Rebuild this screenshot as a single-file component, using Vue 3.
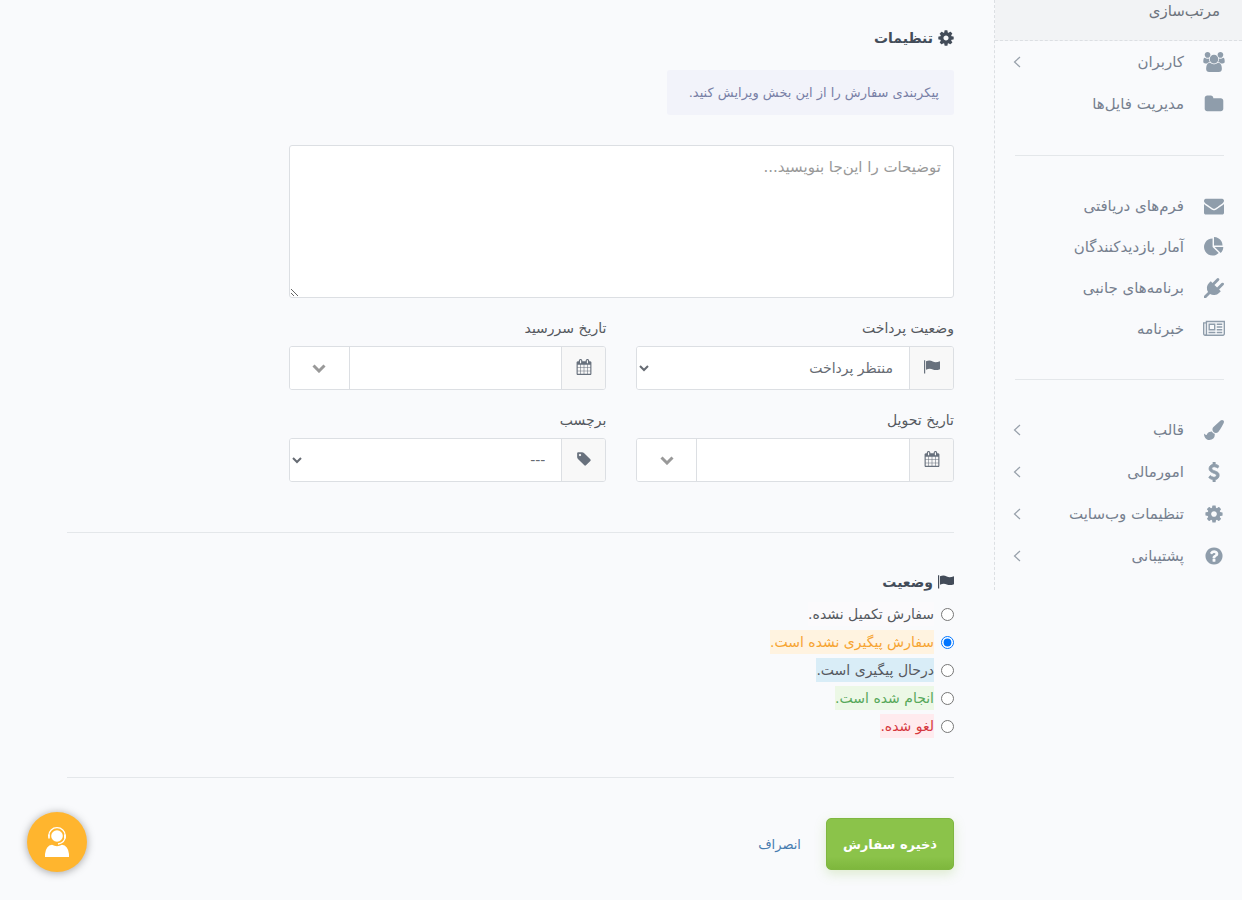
<script setup>
import { ref } from 'vue'

const icons = {
  users: { box: '0 0 1920 1792', d: 'M593 896q-162 5-265 128h-134q-82 0-138-40.5t-56-118.5q0-353 124-353 6 0 43.5 21t97.5 42.5 119 21.5q67 0 133-23-5 37-5 66 0 139 81 256zm1071 637q0 120-73 189.5t-194 69.5h-874q-121 0-194-69.5t-73-189.5q0-53 3.5-103.5t14-109 26.5-108.5 43-97.5 62-81 85.5-53.5 111.5-20q10 0 43 21.5t73 48 107 48 135 21.5 135-21.5 107-48 73-48 43-21.5q61 0 111.5 20t85.5 53.5 62 81 43 97.5 26.5 108.5 14 109 3.5 103.5zm-1024-1277q0 106-75 181t-181 75-181-75-75-181 75-181 181-75 181 75 75 181zm704 384q0 159-112.5 271.5t-271.5 112.5-271.5-112.5-112.5-271.5 112.5-271.5 271.5-112.5 271.5 112.5 112.5 271.5zm576 225q0 78-56 118.5t-138 40.5h-134q-103-123-265-128 81-117 81-256 0-29-5-66 66 23 133 23 59 0 119-21.5t97.5-42.5 43.5-21q124 0 124 353zm-128-609q0 106-75 181t-181 75-181-75-75-181 75-181 181-75 181 75 75 181z' },
  folder: { box: '0 0 1792 1792', d: 'M1728 608v704q0 92-66 158t-158 66h-1216q-92 0-158-66t-66-158v-960q0-92 66-158t158-66h320q92 0 158 66t66 158v32h672q92 0 158 66t66 158z' },
  envelope: { box: '0 0 1792 1792', d: 'M1792 710v794q0 66-47 113t-113 47h-1472q-66 0-113-47t-47-113v-794q44 49 101 87 362 246 497 345 57 42 92.5 65.5t94.5 48 110 24.5h2q51 0 110-24.5t94.5-48 92.5-65.5q170-123 498-345 57-39 100-87zm0-294q0 79-49 151t-122 123q-376 261-468 325-10 7-42.5 31t-54 38.5-52 32.5-57.5 27-50 9h-2q-23 0-50-9t-57.5-27-52-32.5-54-38.5-42.5-31q-91-64-262-182.5t-205-142.5q-62-42-117-115.5t-55-136.5q0-78 41.5-130t118.5-52h1472q65 0 112.5 47t47.5 113z' },
  pie: { box: '0 0 1792 1792', d: 'M768 890l546 546q-106 108-247.5 168t-298.5 60q-209 0-385.5-103t-279.5-279.5-103-385.5 103-385.5 279.5-279.5 385.5-103v762zm187 6h773q0 157-60 298.5t-168 247.5zm709-128h-768v-768q209 0 385.5 103t279.5 279.5 103 385.5z' },
  plug: { box: '0 0 1792 1792', d: 'M1755 453q37 38 37 90.5t-37 90.5l-401 400 150 150-160 160q-163 163-389.5 186.5t-411.5-100.5l-362 362h-181v-181l362-362q-124-185-100.5-411.5t186.5-389.5l160-160 150 150 400-401q38-37 91-37t90 37 37 90.5-37 90.5l-400 401 234 234 401-400q38-37 91-37t90 37z' },
  news: { box: '0 0 2048 1792', d: 'M1024 512h-384v384h384v-384zm128 640v128h-640v-128h640zm0-768v640h-640v-640h640zm640 768v128h-512v-128h512zm0-256v128h-512v-128h512zm0-256v128h-512v-128h512zm0-256v128h-512v-128h512zm-1536 960v-960h-128v960q0 26 19 45t45 19 45-19 19-45zm1664 0v-1088h-1536v1088q0 33-11 64h1483q26 0 45-19t19-45zm128-1216v1216q0 80-56 136t-136 56h-1664q-80 0-136-56t-56-136v-1088h256v-128h1792z' },
  brush: { box: '0 0 1792 1792', d: 'M1615 0q70 0 122.5 46.5t52.5 116.5q0 63-45 151-332 629-465 752-97 91-218 91-126 0-216.5-92.5t-90.5-219.5q0-128 92-212l638-579q59-54 130-54zm-909 1034q39 76 106.5 130t150.5 76l1 71q4 213-129.5 347t-348.5 134q-123 0-218-46.5t-152.5-127.5-86.5-183-29-220q7 5 41 30t62 44.5 59 36.5 46 17q41 0 55-37 25-66 57.5-112.5t69.5-76 88-47.5 103-25.5 125-10.5z' },
  dollar: { box: '0 0 1792 1792', d: 'M1362 1185q0 153-99.5 263.5t-258.5 136.5v175q0 14-9 23t-23 9h-135q-13 0-22.5-9.5t-9.5-22.5v-175q-66-9-127.5-31t-101.5-44.5-74-48-46.5-37.5-17.5-18q-17-21-2-41l103-135q7-10 23-12 15-2 24 9l2 2q113 99 243 125 37 8 74 8 81 0 142.5-43t61.5-122q0-28-15-53t-33.5-42-58.5-37.5-66-32-80-32.5q-39-16-61.5-25t-61.5-26.5-62.5-31-56.5-35.5-53.5-42.5-43.5-49-35.5-58-21-66.5-8.5-78q0-138 98-242t255-134v-180q0-13 9.5-22.5t22.5-9.5h135q14 0 23 9t9 23v176q57 6 110.5 23t87 33.5 63.5 37.5 39 29 15 14q17 18 5 38l-81 146q-8 15-23 16-14 3-27-7-3-3-14.5-12t-39-26.5-58.5-32-74.5-26-85.5-11.5q-95 0-155 43t-60 111q0 26 8.5 48t29.5 41.5 39.5 33 56 31 60.5 27 70 27.5q53 20 81 31.5t76 35 75.5 42.5 62 50 53 63.5 31.5 76.5 13 94z' },
  cog: { box: '0 0 1792 1792', d: 'M1152 896q0-106-75-181t-181-75-181 75-75 181 75 181 181 75 181-75 75-181zm512-109v222q0 12-8 23t-20 13l-185 28q-19 54-39 91 35 50 107 138 10 12 10 25t-9 23q-27 37-99 108t-94 71q-12 0-26-9l-138-108q-44 23-91 38-16 136-29 186-7 28-36 28h-222q-14 0-24.5-8.5t-11.5-21.5l-28-184q-49-16-90-37l-141 107q-10 9-25 9-14 0-25-11-126-114-165-168-7-10-7-23 0-12 8-23 15-21 51-66.5t54-70.5q-27-50-41-99l-183-27q-13-2-21-12.5t-8-23.5v-222q0-12 8-23t19-13l186-28q14-46 39-92-40-57-107-138-10-12-10-24 0-10 9-23 26-36 98.5-107.5t94.5-71.5q13 0 26 10l138 107q44-23 91-38 16-136 29-186 7-28 36-28h222q14 0 24.5 8.5t11.5 21.5l28 184q49 16 90 37l142-107q9-9 24-9 13 0 25 10 129 119 165 170 7 8 7 22 0 12-8 23-15 21-51 66.5t-54 70.5q26 50 41 98l183 28q13 2 21 12.5t8 23.5z' },
  help: { box: '0 0 1792 1792', d: 'M1024 1376v-192q0-14-9-23t-23-9h-192q-14 0-23 9t-9 23v192q0 14 9 23t23 9h192q14 0 23-9t9-23zm256-672q0-88-55.5-163t-138.5-116-170-41q-243 0-371 213-15 24 8 42l132 100q7 6 19 6 16 0 25-12 53-68 86-92 34-24 86-24 48 0 85.5 26t37.5 59q0 38-20 61t-68 45q-63 28-115.5 86.5t-52.5 125.5v36q0 14 9 23t23 9h192q14 0 23-9t9-23q0-19 21.5-49.5t54.5-49.5q32-18 49-28.5t46-35 44.5-48 28-60.5 12.5-81zm384 192q0 209-103 385.5t-279.5 279.5-385.5 103-385.5-103-279.5-279.5-103-385.5 103-385.5 279.5-279.5 385.5-103 385.5 103 279.5 279.5 103 385.5z' },
  flag: { box: '0 0 16 16', d: 'M0 1.2h1.2v13.3H0zM2 2.3C4.5 1.3 6.5 1.3 8.8 2.5C10.8 3.5 12.8 3.4 16 2.2V10.2C13 11.4 10.8 11.3 8.8 10.4C6.5 9.4 4.5 9.5 2 10.8Z' },
  calendar: { box: '0 0 1792 1792', d: 'M192 1664h288v-288h-288v288zm352 0h320v-288h-320v288zm-352-352h288v-320h-288v320zm352 0h320v-320h-320v320zm-352-384h288v-288h-288v288zm736 736h320v-288h-320v288zm-384-736h320v-288h-320v288zm768 736h288v-288h-288v288zm-384-352h320v-320h-320v320zm-352-864v-288q0-13-9.5-22.5t-22.5-9.5h-64q-13 0-22.5 9.5t-9.5 22.5v288q0 13 9.5 22.5t22.5 9.5h64q13 0 22.5-9.5t9.5-22.5zm736 864h288v-320h-288v320zm-384-384h320v-288h-320v288zm384 0h288v-288h-288v288zm32-480v-288q0-13-9.5-22.5t-22.5-9.5h-64q-13 0-22.5 9.5t-9.5 22.5v288q0 13 9.5 22.5t22.5 9.5h64q13 0 22.5-9.5t9.5-22.5zm384-64v1280q0 52-38 90t-90 38h-1408q-52 0-90-38t-38-90v-1280q0-52 38-90t90-38h128v-96q0-66 47-113t113-47h64q66 0 113 47t47 113v96h384v-96q0-66 47-113t113-47h64q66 0 113 47t47 113v96h128q52 0 90 38t38 90z' },
  tag: { box: '0 0 1792 1792', d: 'M576 448q0-53-37.5-90.5t-90.5-37.5-90.5 37.5-37.5 90.5 37.5 90.5 90.5 37.5 90.5-37.5 37.5-90.5zm1067 576q0 53-37 90l-491 492q-39 37-91 37-53 0-90-37l-715-716q-38-37-64.5-101t-26.5-117v-416q0-52 38-90t90-38h416q53 0 117 26.5t102 64.5l715 714q37 39 37 91z' },
}

const menu = [
  [
    { text: 'کاربران', icon: 'users', more: true },
    { text: 'مدیریت فایل‌ها', icon: 'folder' },
  ],
  [
    { text: 'فرم‌های دریافتی', icon: 'envelope' },
    { text: 'آمار بازدیدکنندگان', icon: 'pie' },
    { text: 'برنامه‌های جانبی', icon: 'plug' },
    { text: 'خبرنامه', icon: 'news' },
  ],
  [
    { text: 'قالب', icon: 'brush', more: true },
    { text: 'امورمالی', icon: 'dollar', more: true },
    { text: 'تنظیمات وب‌سایت', icon: 'cog', more: true },
    { text: 'پشتیبانی', icon: 'help', more: true },
  ],
]

const fields = [
  { id: 'payment', label: 'وضعیت پرداخت', icon: 'flag', options: ['منتظر پرداخت'] },
  { id: 'due', label: 'تاریخ سررسید', icon: 'calendar' },
  { id: 'delivery', label: 'تاریخ تحویل', icon: 'calendar' },
  { id: 'tag', label: 'برچسب', icon: 'tag', options: ['---'] },
]

const statuses = [
  { id: 'incomplete', text: 'سفارش تکمیل نشده.' },
  { id: 'pending', text: 'سفارش پیگیری نشده است.' },
  { id: 'progress', text: 'درحال پیگیری است.' },
  { id: 'done', text: 'انجام شده است.' },
  { id: 'cancelled', text: 'لغو شده.' },
]

const status = ref('pending')
const notes = ref('')
</script>

<template>
  <div class="page" dir="rtl" lang="fa">
    <aside class="sidebar">
      <a class="sub-item" href="#">مرتب‌سازی</a>
      <nav>
        <ul v-for="(group, g) in menu" :key="g" class="menu-group">
          <li v-for="item in group" :key="item.text">
            <a class="menu-item" :class="{ compact: g === 1 }" href="#">
              <span class="menu-icon">
                <svg :class="['icon', item.icon]" :viewBox="icons[item.icon].box"><path :d="icons[item.icon].d" /></svg>
              </span>
              <span class="menu-text">{{ item.text }}</span>
              <svg v-if="item.more" class="arrow" viewBox="0 0 8 12"><path d="M7 1L1.5 6L7 11" /></svg>
            </a>
          </li>
        </ul>
      </nav>
    </aside>

    <main class="content">
      <form @submit.prevent>
        <section class="settings">
          <h2>
            <svg class="title-icon" viewBox="96 96 1600 1600"><path :d="icons.cog.d" /></svg>
            تنظیمات
          </h2>
          <p class="hint">پیکربندی سفارش را از این بخش ویرایش کنید.</p>
          <textarea v-model="notes" class="notes" aria-label="توضیحات" placeholder="توضیحات را این‌جا بنویسید..."></textarea>
          <div class="fields">
            <div v-for="field in fields" :key="field.id" class="field">
              <label :for="field.id">{{ field.label }}</label>
              <div class="group">
                <span class="addon">
                  <svg class="field-icon" :viewBox="icons[field.icon].box"><path :d="icons[field.icon].d" /></svg>
                </span>
                <select v-if="field.options" :id="field.id">
                  <option v-for="option in field.options" :key="option">{{ option }}</option>
                </select>
                <template v-else>
                  <input :id="field.id" type="text" />
                  <button class="picker" type="button" :aria-label="field.label">
                    <svg viewBox="0 0 14 9"><path d="M1.5 1.5L7 7L12.5 1.5" /></svg>
                  </button>
                </template>
              </div>
            </div>
          </div>
        </section>

        <section class="status">
          <h2>
            <svg class="title-icon" :viewBox="icons.flag.box"><path :d="icons.flag.d" /></svg>
            وضعیت
          </h2>
          <div v-for="item in statuses" :key="item.id" class="choice">
            <input :id="item.id" v-model="status" type="radio" name="status" :value="item.id" />
            <label :for="item.id" :class="item.id">{{ item.text }}</label>
          </div>
        </section>

        <footer class="actions">
          <button class="save" type="submit">ذخیره سفارش</button>
          <a class="cancel" href="#">انصراف</a>
        </footer>
      </form>
    </main>

    <button class="support" type="button" aria-label="پشتیبانی">
      <svg viewBox="0 0 24 30">
        <circle cx="12" cy="9" r="5.8" fill="#fff" />
        <path d="M3.8 9.500V8.500a8.200 7.800 0 0 1 16.400 0v1q0 6-7.200 7.500" fill="none" stroke="#fff" stroke-width="1.300" />
        <path d="M3.200 7.500h1.600v4H3.200zM19 7.500h1.800v4H19z" fill="#fff" />
        <path d="M0 30V27Q1 18.500 7 17.800Q12 20.500 17 17.800Q23 18.500 24 27V30Z" fill="#fff" />
      </svg>
    </button>
  </div>
</template>

<style>
body {
  background: #f9fafc;
}
</style>

<style scoped>
.page,
.page button,
.page input,
.page select,
.page textarea {
  font-family: "DejaVu Sans", sans-serif;
}
.page {
  display: flex;
  align-items: flex-start;
  min-height: 100vh;
  font-size: 14px;
  color: #55595f;
}
.page *,
.page *::before {
  box-sizing: border-box;
}
a {
  text-decoration: none;
}
svg {
  display: block;
  fill: currentColor;
}
.sidebar {
  flex: 0 0 248px;
  padding-bottom: 13px;
  border-left: 1px dashed #dcdfe3;
}
.sub-item {
  display: block;
  height: 41px;
  padding: 0 22px;
  border-bottom: 1px dashed #dcdfe3;
  background: #f2f3f5;
  color: #6d737d;
  font-size: 15px;
  line-height: 22px;
}
.menu-group {
  margin: 0;
  padding: 0;
  list-style: none;
}
.menu-group + .menu-group {
  padding-top: 60px;
  background: linear-gradient(#e4e7ea, #e4e7ea) 20px 30px / calc(100% - 38px) 1px no-repeat;
}
.menu-item {
  display: flex;
  align-items: center;
  height: 42px;
  padding: 0 18px;
  color: #76808f;
  font-size: 15px;
}
.menu-item.compact {
  height: 41px;
}
.menu-icon {
  display: flex;
  justify-content: center;
  width: 20px;
  margin-left: 20px;
  color: #8f9dab;
}
.icon {
  flex: none;
  width: 20px;
  height: 20px;
}
.icon.users,
.icon.news {
  width: 22px;
}
.icon.dollar {
  stroke: currentColor;
  stroke-width: 70;
}
.menu-text {
  flex: 1;
}
.arrow {
  width: 8px;
  height: 12px;
  fill: none;
  stroke: #98a1ab;
  stroke-width: 1.2;
}
.content {
  flex: 1;
  min-width: 0;
  padding: 26px 40px 30px 67px;
}
h2 {
  display: flex;
  align-items: center;
  gap: 5px;
  height: 24px;
  margin: 0;
  color: #434c59;
  font-size: 14px;
  font-weight: 700;
}
.title-icon {
  width: 16px;
  height: 16px;
}
.settings {
  width: 75%;
}
.hint {
  width: fit-content;
  margin: 20px 0 30px;
  padding: 0 15px 0 22px;
  border-radius: 3px;
  background: #f2f3fa;
  color: #7880a6;
  font-size: 13px;
  line-height: 45px;
}
.notes {
  display: block;
  width: 100%;
  height: 153px;
  padding: 10px 12px;
  border: 1px solid #dcdfe3;
  border-radius: 3px;
  background: #fff;
  font-size: 15px;
  line-height: 22px;
}
.notes::placeholder {
  color: #999;
}
.fields {
  display: grid;
  grid-template-columns: 1fr 1fr;
  gap: 18px 30px;
  margin-top: 18px;
}
.field > label {
  display: block;
  height: 24px;
  margin-bottom: 6px;
  font-size: 14px;
  line-height: 24px;
}
.group {
  display: flex;
  height: 44px;
  border: 1px solid #dcdfe3;
  border-radius: 3px;
  background: #fff;
  overflow: hidden;
}
.addon {
  display: flex;
  flex: 0 0 44px;
  align-items: center;
  justify-content: center;
  padding-bottom: 2px;
  border-left: 1px solid #dcdfe3;
  background: #f8f8f8;
  color: #68717d;
}
.field-icon {
  width: 16px;
  height: 16px;
}
.group select,
.group input {
  flex: 1;
  min-width: 0;
  border: 0;
  background: #fff;
  color: #666b73;
  font-size: 14px;
}
.group select {
  padding: 0 12px 0 0;
}
.group input {
  padding: 0 12px;
}
.picker {
  display: flex;
  flex: 0 0 60px;
  align-items: center;
  justify-content: center;
  padding: 0;
  border: 0;
  border-right: 1px solid #dcdfe3;
  background: #fff;
}
.picker svg {
  width: 14px;
  height: 9px;
  fill: none;
  stroke: #999;
  stroke-width: 3;
}
.status {
  margin-top: 50px;
  padding: 37px 0;
  border-top: 1px solid #e4e7ea;
  border-bottom: 1px solid #e4e7ea;
}
.status h2 {
  margin-bottom: 6px;
}
.choice {
  display: flex;
  align-items: center;
  gap: 7px;
  height: 28px;
}
.choice input {
  width: 13px;
  height: 13px;
  margin: 0;
}
.choice label {
  font-size: 14px;
  line-height: 24px;
}
.incomplete {
  background: #fbfafc;
}
.pending {
  background: #fff3e0;
  color: #f6a432;
}
.progress {
  background: #d9edf7;
}
.done {
  background: #ecf8e6;
  color: #57a85b;
}
.cancelled {
  background: #ffebee;
  color: #d5383e;
}
.actions {
  display: flex;
  align-items: center;
  gap: 25px;
  margin-top: 40px;
}
.save {
  height: 52px;
  padding: 0 16px;
  border: 1px solid #7fb740;
  border-radius: 5px;
  background: linear-gradient(#8bc34a 75%, #7eb73d);
  box-shadow: 0 4px 12px rgba(139, 195, 74, 0.25);
  color: #fff;
  font-size: 13px;
  font-weight: 700;
}
.cancel {
  color: #477cb0;
  font-size: 13px;
}
.support {
  position: fixed;
  bottom: 28px;
  left: 27px;
  display: flex;
  align-items: center;
  justify-content: center;
  width: 60px;
  height: 60px;
  padding: 0;
  border: 0;
  border-radius: 50%;
  background: #ffb52e;
  box-shadow: 0 1px 8px rgba(0, 0, 0, 0.35);
}
.support svg {
  width: 24px;
  height: 30px;
}
</style>
